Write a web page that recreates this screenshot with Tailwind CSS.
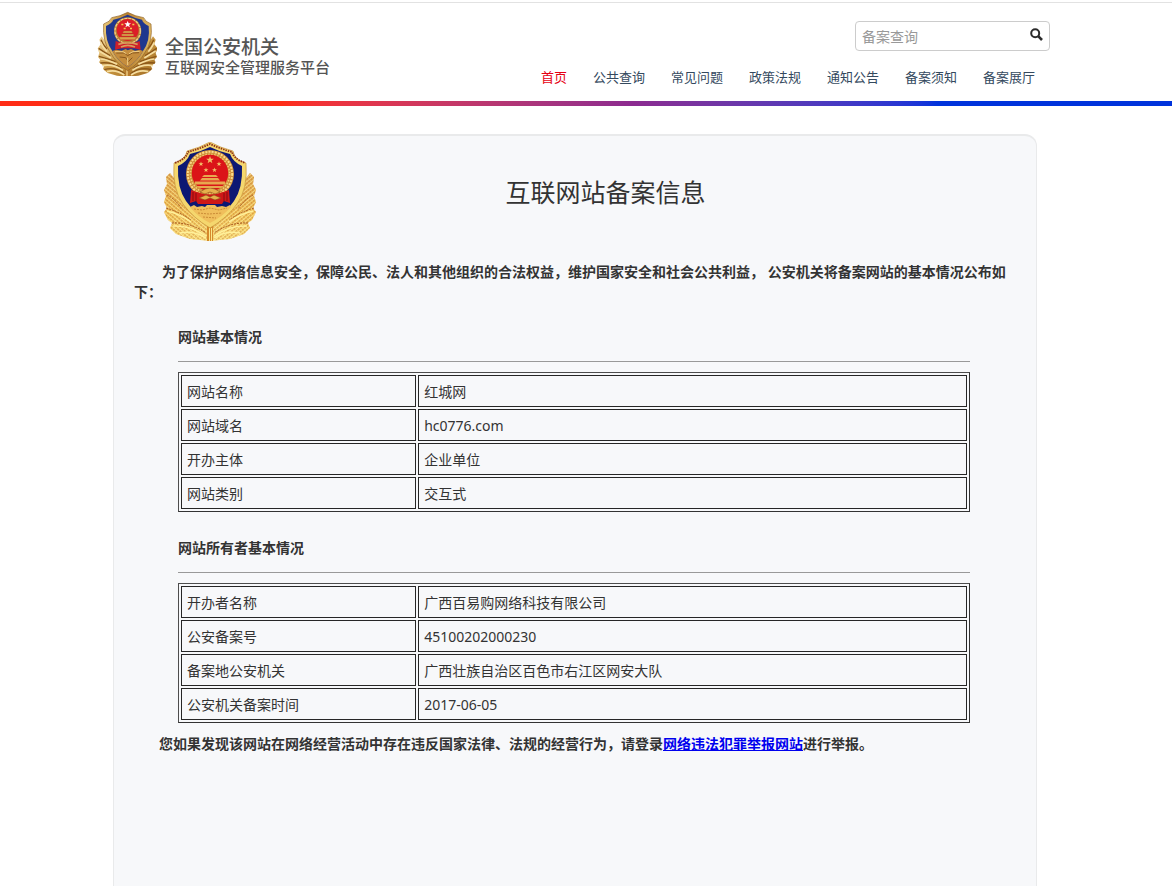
<!DOCTYPE html>
<html lang="zh-CN">
<head>
<meta charset="utf-8">
<meta name="viewport" content="width=device-width, initial-scale=1">
<title>全国公安机关互联网站安全管理服务平台</title>
<script src="https://cdn.jsdelivr.net/npm/@tailwindcss/browser@4"></script>
</head>
<body class="flex min-h-screen flex-col bg-white font-['Noto_Sans','Noto_Sans_CJK_SC',sans-serif] text-sm leading-5 text-[#333]">

<header class="mt-0.5 border-t border-[#e2e2e2]">
  <div class="flex h-[98px] justify-between pl-[97px] pr-[122px]">
    <a href="#" class="flex items-start gap-2 pt-[5px] text-[#555]">
      <svg class="h-[66px] w-[60px] shrink-0 mt-0.5" viewBox="6 3 180 198" role="img" aria-label="警徽">
        <defs>
          <linearGradient id="bronze" x1="0" y1="0" x2="1" y2="1">
            <stop offset="0" stop-color="#f2d79a"/><stop offset=".5" stop-color="#c7953f"/><stop offset="1" stop-color="#a06a22"/>
          </linearGradient>
          <linearGradient id="rim" x1="0" y1="0" x2="1" y2="0">
            <stop offset="0" stop-color="#e9c878"/><stop offset=".5" stop-color="#b8802f"/><stop offset="1" stop-color="#dfb965"/>
          </linearGradient>
        </defs>
        <path d="M20 82 30 96 98 182 165 96 174 82 182 92 178 106 188 118 182 132 186 144 178 152 182 160 168 172 172 180 158 192 130 200 98 204 66 200 38 192 24 180 27 172 12 160 16 152 9 144 13 132 8 118 17 106 13 92Z" fill="url(#bronze)"/>
        <path d="M18 92Q24 108 36 120M11 118Q28 130 46 140M12 142Q36 148 62 158M16 162Q50 158 80 178M28 182Q60 172 92 196M176 92Q170 108 158 120M185 118Q168 130 150 140M184 142Q160 148 134 158M180 162Q146 158 116 178M168 182Q136 172 104 196" fill="none" stroke="#8b5719" stroke-width="4"/>
        <path d="M17 100Q24 116 36 128M12 126Q30 136 48 147M16 150Q40 152 66 166M22 170Q54 164 84 184M36 188Q62 180 88 198M178 100Q170 116 160 128M182 126Q166 136 148 147M178 150Q156 152 130 166M174 170Q142 164 112 184M160 188Q134 180 108 198" fill="none" stroke="#f5dda0" stroke-width="5"/>
        <path d="M90 180h16v23H90Z" fill="#b67a2c"/><path d="M96 180v23" stroke="#f2d48c" stroke-width="4"/>
        <path d="M98 10Q120 22 146 26 150 38 168 45 174 98 150 130 132 164 98 185 64 164 46 130 22 98 26 45 46 38 50 26 76 22 98 10Z" fill="url(#rim)" stroke="#8f6024" stroke-width="2"/>
        <path d="M98 17Q120 28 141 32 145 44 161 51 166 96 144 126 128 156 98 174 68 156 52 126 30 96 33 51 50 44 55 32 76 28 98 17Z" fill="#20378e"/>
        <path d="M52 126 64 122 80 125 92 120 98 124 108 120 120 125 134 122 144 126Q128 156 98 174 68 156 52 126Z" fill="#c58d3d"/>
        <path d="M64 132 88 132 98 140 112 132 132 131M74 144 92 146 100 158 112 146" fill="none" stroke="#8a571d" stroke-width="3"/>
        <path d="M60 128 84 128 94 134M102 134 114 128 134 127M98 146V168" fill="none" stroke="#f0cf87" stroke-width="3"/>
        <circle cx="98" cy="66" r="41" fill="#b97f35"/>
        <circle cx="98" cy="66" r="38" fill="none" stroke="#efcf85" stroke-width="4" stroke-dasharray="9 3"/>
        <circle cx="98" cy="63" r="33" fill="#dc1f27"/>
        <path d="M62 96Q80 104 98 102 118 104 134 96L137 122 118 118 80 118 60 122Z" fill="#cf1f28"/>
        <path d="M70 106Q98 98 128 106M78 114Q98 104 120 114" fill="none" stroke="#d79b5b" stroke-width="5"/>
        <path d="M98 36 101 43 108 43 102 48 105 55 98 51 91 55 94 48 88 43 95 43Z" fill="#fff"/>
        <path d="M79 44h6v5h-6ZM112 44h6v5h-6ZM86 56h6v5h-6ZM105 56h6v5h-6Z" fill="#f6c94f"/>
        <path d="M86 66h24l3 6H83ZM80 75h36v6H80ZM72 84h52l-4 8H76Z" fill="#dba34d" stroke="#a64a22" stroke-width="1"/>
      </svg>
      <span class="flex flex-col gap-px pt-[29px] font-medium">
        <span class="text-[19px] leading-5">全国公安机关</span>
        <span class="text-[15px] leading-[18px]">互联网安全管理服务平台</span>
      </span>
    </a>
    <div class="flex flex-col items-end pt-[18px]">
      <form class="flex h-[30px] w-[195px] rounded border border-[#ccc]" role="search">
        <input type="text" aria-label="备案查询" placeholder="备案查询" class="min-w-0 flex-1 bg-transparent pl-1.5 pt-0.5 text-sm outline-none placeholder:text-[#999]">
        <button type="submit" aria-label="搜索" class="flex w-[26px] items-start justify-center pt-1.5">
          <svg class="h-[13px] w-[13px]" viewBox="0 0 13 13" fill="none" stroke="#2b2b2b"><circle cx="5.2" cy="5.2" r="4" stroke-width="2"/><path d="M8.2 8.2 12 12" stroke-width="2.6"/></svg>
        </button>
      </form>
      <nav class="mt-4 flex gap-[26px] pr-[15px] text-[13px] text-[#34495e]">
        <a href="#" class="text-[#e60012]">首页</a>
        <a href="#">公共查询</a>
        <a href="#">常见问题</a>
        <a href="#">政策法规</a>
        <a href="#">通知公告</a>
        <a href="#">备案须知</a>
        <a href="#">备案展厅</a>
      </nav>
    </div>
  </div>
  <div class="h-[5px] bg-linear-to-r from-[#ff2d16] from-24% via-[#8c2a90] via-54% to-[#0033dc] to-80%"></div>
</header>

<main class="mt-7 ml-[113px] mr-[135px] flex-1 rounded-t-xl border border-t-2 border-b-0 border-[#e9eaeb] bg-[#f7f8fa] px-5">
  <div class="flex pl-[30px] pt-1.5">
    <svg class="h-[100px] w-[92px] shrink-0" viewBox="0 0 92 100" role="img" aria-label="警徽">
      <defs>
        <linearGradient id="gold" x1="0" y1="0" x2="0" y2="1">
          <stop offset="0" stop-color="#e0a64a"/><stop offset=".6" stop-color="#f3c552"/><stop offset="1" stop-color="#fbe27c"/>
        </linearGradient>
        <pattern id="grain" width="3" height="3" patternUnits="userSpaceOnUse" patternTransform="rotate(40)">
          <path d="M0 1h2" stroke="#b0561c" stroke-width=".9"/><path d="M0 2.3h3" stroke="#fff3a8" stroke-width=".9"/>
        </pattern>
        <pattern id="grain2" width="3" height="3" patternUnits="userSpaceOnUse" patternTransform="rotate(-40)">
          <path d="M0 1h2" stroke="#b0561c" stroke-width=".9"/><path d="M0 2.3h3" stroke="#fff3a8" stroke-width=".9"/>
        </pattern>
        <path id="star" d="M0-4 .95-1.3 3.8-1.24 1.53.5 2.35 3.24 0 1.6-2.35 3.24-1.53.5-3.8-1.24-.95-1.3z" fill="#f3c468"/>
      </defs>
      <path d="M6 31 10 36 20 60 46 84V99L26 97 12 92 6 86 8 81 4 78 0 70 3 66 0 60 2 54 0 48 3 42 2 35Z" fill="url(#gold)"/>
      <path d="M86 31 82 36 72 60 46 84V99L66 97 80 92 86 86 84 81 88 78 92 70 89 66 92 60 90 54 92 48 89 42 90 35Z" fill="url(#gold)"/>
      <path d="M6 31 10 36 20 60 46 84V99L26 97 12 92 6 86 8 81 4 78 0 70 3 66 0 60 2 54 0 48 3 42 2 35Z" fill="url(#grain)" opacity=".75"/>
      <path d="M86 31 82 36 72 60 46 84V99L66 97 80 92 86 86 84 81 88 78 92 70 89 66 92 60 90 54 92 48 89 42 90 35Z" fill="url(#grain2)" opacity=".75"/>
      <path d="M8 81Q26 80 42 91M84 81Q66 80 50 91M2 66Q16 70 27 78M90 66Q76 70 65 78M3 53Q11 57 18 67M89 53Q81 57 74 67" fill="none" stroke="#a8581f" stroke-width="1" stroke-dasharray="2 1"/>
      <path d="M9 84Q26 83 42 94M83 84Q66 83 50 94M3 69Q16 72 27 80M89 69Q76 72 65 80M16 91Q30 88 42 96M76 91Q62 88 50 96" fill="none" stroke="#fff09a" stroke-width="1.5"/>
      <path d="M43 84h6v15h-6z" fill="#d58a2c"/><path d="M45 86h1v13h-1zM47 86h1v13h-1z" fill="#fbe88a"/>
      <path d="M46 0Q57 6 69 9 70 17 82 21 84 47 73 62 63 76 46 86 29 76 19 62 8 47 10 21 22 17 23 9 35 6 46 0Z" fill="#f5d76e" stroke="#c08a34" stroke-width=".6"/>
      <path d="M11 21Q22 17 24 10 35 7 46 2 57 7 68 10 70 17 81 21" fill="none" stroke="#8b2e18" stroke-width="1.8" stroke-dasharray="1.5 1"/>
      <path d="M46 5Q56 10 66 12 69 20 78 24 79 46 70 59 61 72 46 80 31 72 22 59 13 46 14 24 23 20 26 12 36 10 46 5Z" fill="#0d1873"/>
      <path d="M26 65 30 63 33 65 38 64 41 65 43 63 51 63 53 65 58 64 62 65 66 63 67 65Q58 75 46 81 34 75 26 65Z" fill="#f0bf5c"/>
      <path d="M30 67 38 68 46 66 55 68 63 66M34 71 45 72 58 71M39 75 52 76" fill="none" stroke="#c07d2c" stroke-width=".8" stroke-dasharray="2 1"/>
      <circle cx="46" cy="32" r="24" fill="#cf8f3a"/>
      <circle cx="46" cy="32" r="22.2" fill="none" stroke="#fbdc8a" stroke-width="2" stroke-dasharray="2 1.2"/>
      <circle cx="46" cy="32" r="19.6" fill="none" stroke="#f3cc74" stroke-width="1.6" stroke-dasharray="1.5 1.5"/>
      <circle cx="46" cy="31" r="18.2" fill="#db1418"/>
      <path d="M27 48 33 50Q46 55 59 50L65 48 66 61 60 59 58 62H34L32 59 26 61Z" fill="#cf1717"/>
      <path d="M29 50V59M32 51V60M60 51V60M63 50V59" stroke="#7d0c10" stroke-width=".9"/>
      <path d="M36 50Q46 42 56 50L51 52 46 50 41 52ZM35 56 42 53 46 55 50 53 57 56 51 58 46 56 41 58Z" fill="#e6b04c" stroke="#8c4a1a" stroke-width=".6"/>
      <use href="#star" x="46" y="18"/>
      <use href="#star" transform="translate(37 22) scale(.65)"/><use href="#star" transform="translate(55 22) scale(.65)"/>
      <use href="#star" transform="translate(42 28) scale(.65)"/><use href="#star" transform="translate(50.5 28) scale(.65)"/>
      <path d="M40 33h12l2 2H38ZM38 36h16l2 2.5H36ZM31 39.5h30v3H31ZM32 44h28l-3 2H35Z" fill="#e8a84e"/>
    </svg>
    <h1 class="flex-1 pr-[61px] pt-8 text-center text-[25px] leading-9">互联网站备案信息</h1>
  </div>
  <p class="mt-5 indent-7 font-bold">为了保护网络信息安全，保障公民、法人和其他组织的合法权益，维护国家安全和社会公共利益， 公安机关将备案网站的基本情况公布如下：</p>

  <section class="ml-11 mr-[46px] mt-[25px]">
    <h2 class="font-bold">网站基本情况</h2>
    <hr class="mt-3.5 border-[#999]">
    <table class="mt-2.5 w-full table-fixed border-separate border-spacing-[2px] border border-t-[#4d4d4d] border-l-[#4d4d4d] border-b-[#333] border-r-[#333] [&_:is(td,th)]:h-8 [&_:is(td,th)]:border [&_:is(td,th)]:border-[#262626] [&_:is(td,th)]:px-[5px] [&_:is(td,th)]:pt-0.5 [&_:is(td,th)]:text-left [&_:is(td,th)]:font-normal">
      <colgroup><col class="w-[30%]"><col></colgroup>
      <tr><th scope="row">网站名称</th><td>红城网</td></tr>
      <tr><th scope="row">网站域名</th><td>hc0776.com</td></tr>
      <tr><th scope="row">开办主体</th><td>企业单位</td></tr>
      <tr><th scope="row">网站类别</th><td>交互式</td></tr>
    </table>
  </section>

  <section class="ml-11 mr-[46px] mt-[26px]">
    <h2 class="font-bold">网站所有者基本情况</h2>
    <hr class="mt-3.5 border-[#999]">
    <table class="mt-2.5 w-full table-fixed border-separate border-spacing-[2px] border border-t-[#4d4d4d] border-l-[#4d4d4d] border-b-[#333] border-r-[#333] [&_:is(td,th)]:h-8 [&_:is(td,th)]:border [&_:is(td,th)]:border-[#262626] [&_:is(td,th)]:px-[5px] [&_:is(td,th)]:pt-0.5 [&_:is(td,th)]:text-left [&_:is(td,th)]:font-normal">
      <colgroup><col class="w-[30%]"><col></colgroup>
      <tr><th scope="row">开办者名称</th><td>广西百易购网络科技有限公司</td></tr>
      <tr><th scope="row">公安备案号</th><td>45100202000230</td></tr>
      <tr><th scope="row">备案地公安机关</th><td>广西壮族自治区百色市右江区网安大队</td></tr>
      <tr><th scope="row">公安机关备案时间</th><td>2017-06-05</td></tr>
    </table>
  </section>
  <p class="mt-[11px] pl-[25px] font-bold">您如果发现该网站在网络经营活动中存在违反国家法律、法规的经营行为，请登录<a href="#" class="text-[#0000ee] underline">网络违法犯罪举报网站</a>进行举报。</p>
</main>
</body>
</html>
